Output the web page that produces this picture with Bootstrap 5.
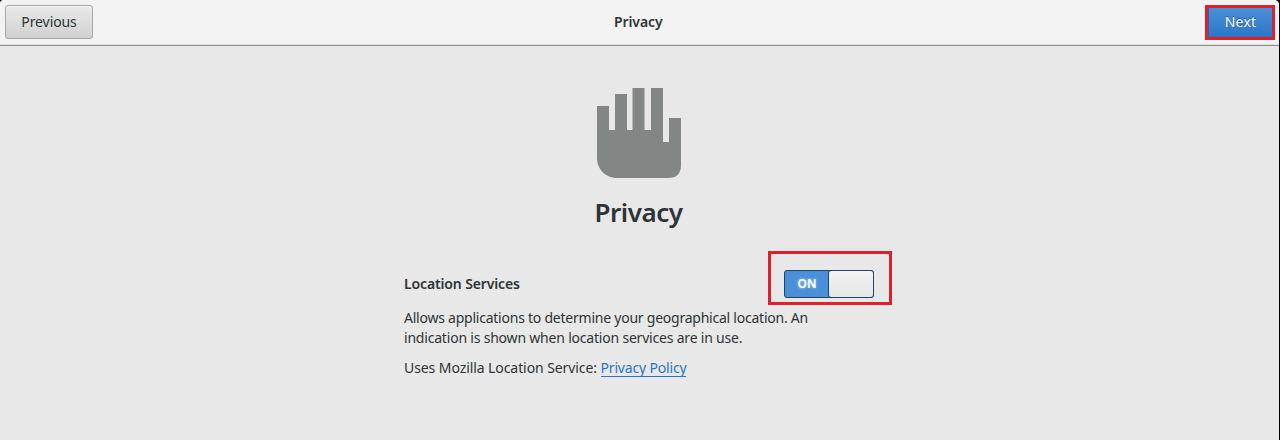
<!DOCTYPE html>
<html lang="en">
<head>
<meta charset="utf-8">
<meta name="viewport" content="width=device-width, initial-scale=1">
<title>Privacy</title>
<link href="https://cdn.jsdelivr.net/npm/bootstrap@5.3.0/dist/css/bootstrap.min.css" rel="stylesheet">
<style>
  body { background: #000; color: #2e3436; font: 14px/20px "Noto Sans", sans-serif; }
  .setup-window { width: 1279px; height: 440px; background: #e8e8e8; border-radius: 4px 5px 0 0; }
  .title-bar { height: 46px; padding: 5px 4px 0 5px; background: #f3f3f3; border-bottom: 1px solid #8e9090; box-shadow: inset 0 -1px #dcdcdc; }
  .title-bar .btn { font-size: 14px; line-height: 20px; }
  .btn-prev { width: 88px; height: 34px; padding: 0; border: 1px solid #a8a8a8; border-radius: 3px; color: #2e3436; background: linear-gradient(#eaeaea, #d0d0d0); box-shadow: inset 0 1px #f4f4f4; letter-spacing: -.1px; }
  .title-bar .btn-next, .title-bar .btn-next:hover { width: 70px; height: 35px; padding: 0 0 2px 1px; border: 3px solid #dd202a; border-radius: 0; color: #fff; background: linear-gradient(#4a90d9, #2a76c6); text-shadow: 0 -1px rgba(0,0,0,.45); box-shadow: inset 1px 0 #2a65a4; letter-spacing: .2px; }
  .semi { font-weight: 600; }
  .bar-title { top: 12px; left: 614px; letter-spacing: -.1px; }
  .hand { margin-top: 41px; margin-right: 1px; }
  .page-title { font-size: 26px; line-height: 36px; margin: 15px 2px 1px 0; letter-spacing: -.45px; }
  .content-col { width: 488px; margin: 20px 0 0 404px; }
  .loc-label { padding-top: 23px; letter-spacing: -.13px; }
  .marked { width: 124px; height: 54px; border: 3px solid #dd202a; }
  .on-off { width: 90px; height: 28px; margin-top: 16px; margin-left: 13px; border: 1px solid #1c4469; border-radius: 3px; background: #4a90d9; color: #fff; font-size: 12px; line-height: 26px; text-shadow: 0 0 3px rgba(255,255,255,.7); }
  .on-off .knob { width: 46px; border: 1px solid #1c4469; margin: -1px; border-radius: 3px; background: linear-gradient(#f3f3f3, #e7e7e7); }
  .about-line { margin: 3px 0 10px; letter-spacing: -.235px; }
  .about-line .second { letter-spacing: -.2px; }
  .service-line { letter-spacing: -.08px; }
  .privacy-link { color: #2a76c6; border-bottom: 1px solid #2a76c6; display: inline-block; line-height: 16px; letter-spacing: -.18px; }
</style>
</head>
<body class="overflow-hidden">
<div class="setup-window overflow-hidden">
  <header class="title-bar d-flex justify-content-between align-items-start position-relative">
    <button type="button" class="btn btn-prev">Previous</button>
    <div class="bar-title semi position-absolute">Privacy</div>
    <button type="button" class="btn btn-next">Next</button>
  </header>
  <main>
    <div class="d-flex flex-column align-items-center">
      <svg class="hand" width="86" height="92" viewBox="0 0 86 92" fill="#828685" aria-hidden="true">
        <path d="M1 19H13V43H19V7H31V43H36.500V1H48.500V43H55V1H67V55H73V31H85V78Q85 91 72 91H21C9.500 91 1 82 1 71Z"/>
      </svg>
      <h1 class="page-title semi">Privacy</h1>
    </div>
    <div class="content-col">
      <div class="d-flex justify-content-between">
        <div class="semi loc-label">Location Services</div>
        <div class="marked">
          <div class="on-off d-flex semi" role="switch" aria-checked="true">
            <span class="flex-fill text-center">ON</span><span class="knob"></span>
          </div>
        </div>
      </div>
      <p class="about-line">Allows applications to determine your geographical location. An<br><span class="second">indication is shown when location services are in use.</span></p>
      <p class="service-line mb-0">Uses Mozilla Location Service: <a href="#" class="privacy-link text-decoration-none">Privacy Policy</a></p>
    </div>
  </main>
</div>
<script src="https://cdn.jsdelivr.net/npm/bootstrap@5.3.0/dist/js/bootstrap.bundle.min.js"></script>
</body>
</html>
